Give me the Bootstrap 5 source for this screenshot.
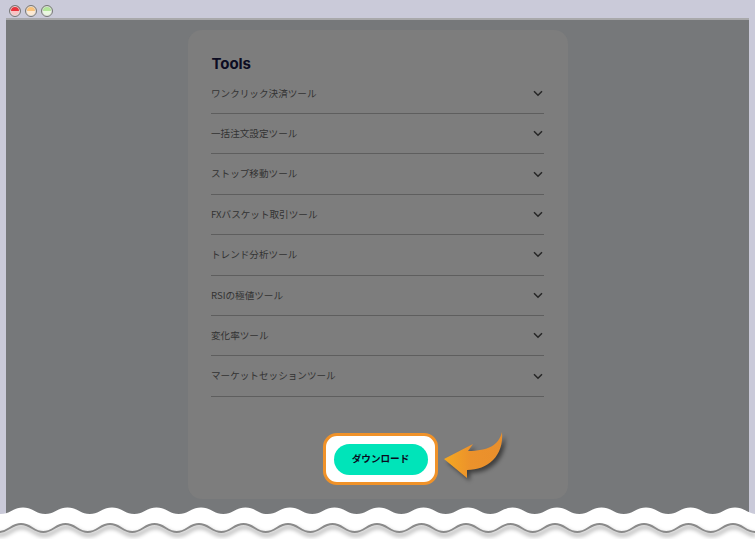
<!DOCTYPE html>
<html lang="ja"><head><meta charset="utf-8">
<link href="https://cdn.jsdelivr.net/npm/bootstrap@5.3.0/dist/css/bootstrap.min.css" rel="stylesheet">
<style>
html,body{margin:0;height:540px;width:755px;overflow:hidden;background:#fff}
.shot-frame{height:540px;background:#cacad9;position:relative;overflow:hidden}
.shot-top{height:18px;padding:5px 0 0 9px;gap:4px;border-top-left-radius:4px}
.dot{width:12px;height:12px;border-radius:50%;border:1px solid #777;box-shadow:inset 0 0 0 1px #ddd}
.dot-r{background:linear-gradient(#e8323c 0 50%,#f9c3c3 50%)}
.dot-o{background:linear-gradient(#f8c27c 0 50%,#fde9d2 50%)}
.dot-g{background:linear-gradient(#b3e59a 0 50%,#eaf8e0 50%)}
.shot-view{height:522px;margin:0 6px;background:#76787a;border-top:2px solid #a9a9ab;padding-top:10px}
.tools-card{width:380px;height:469px;margin-left:182px;background:#7d7d7d;border-radius:14px;padding:25px 24px 0 23px}
.tools-title{font:700 15px/18px Inter,"Liberation Sans",sans-serif;color:#0c0c22;margin:0 0 .7px;padding-left:.5px;letter-spacing:-.05px}
.tool-row{height:40.4px;border-bottom:1px solid #5e5e5e;font:400 9.6px/1 "Noto Sans CJK JP",sans-serif;color:#333}
.tool-row svg{margin-right:1px}
.dl-wrap{margin-top:36.3px;padding-left:5px}
.dl-ring{width:115px;height:52px;background:#fff;border:3px solid #f09229;border-radius:14px;padding-left:1px}
.dl-btn{width:94px;height:31px;border:0;border-radius:16px;background:#00e4b9;color:#0a0a1e;font:700 9.6px/1 "Noto Sans CJK JP",sans-serif;padding:0}
.over-art{position:absolute;left:0;top:0;pointer-events:none}
</style></head>
<body>
<div class="shot-frame">
  <div class="shot-top d-flex"><span class="dot dot-r"></span><span class="dot dot-o"></span><span class="dot dot-g"></span></div>
  <div class="shot-view">
    <div class="tools-card">
      <h2 class="tools-title">Tools</h2>
      <div class="tool-row d-flex align-items-center justify-content-between">ワンクリック決済ツール<svg width="10" height="7" viewBox="0 0 10 7"><path d="M1 1.2 5 5.2 9 1.2" fill="none" stroke="#262626" stroke-width="1.5"/></svg></div>
      <div class="tool-row d-flex align-items-center justify-content-between">一括注文設定ツール<svg width="10" height="7" viewBox="0 0 10 7"><path d="M1 1.2 5 5.2 9 1.2" fill="none" stroke="#262626" stroke-width="1.5"/></svg></div>
      <div class="tool-row d-flex align-items-center justify-content-between">ストップ移動ツール<svg width="10" height="7" viewBox="0 0 10 7"><path d="M1 1.2 5 5.2 9 1.2" fill="none" stroke="#262626" stroke-width="1.5"/></svg></div>
      <div class="tool-row d-flex align-items-center justify-content-between">FXバスケット取引ツール<svg width="10" height="7" viewBox="0 0 10 7"><path d="M1 1.2 5 5.2 9 1.2" fill="none" stroke="#262626" stroke-width="1.5"/></svg></div>
      <div class="tool-row d-flex align-items-center justify-content-between">トレンド分析ツール<svg width="10" height="7" viewBox="0 0 10 7"><path d="M1 1.2 5 5.2 9 1.2" fill="none" stroke="#262626" stroke-width="1.5"/></svg></div>
      <div class="tool-row d-flex align-items-center justify-content-between">RSIの極値ツール<svg width="10" height="7" viewBox="0 0 10 7"><path d="M1 1.2 5 5.2 9 1.2" fill="none" stroke="#262626" stroke-width="1.5"/></svg></div>
      <div class="tool-row d-flex align-items-center justify-content-between">変化率ツール<svg width="10" height="7" viewBox="0 0 10 7"><path d="M1 1.2 5 5.2 9 1.2" fill="none" stroke="#262626" stroke-width="1.5"/></svg></div>
      <div class="tool-row d-flex align-items-center justify-content-between">マーケットセッションツール<svg width="10" height="7" viewBox="0 0 10 7"><path d="M1 1.2 5 5.2 9 1.2" fill="none" stroke="#262626" stroke-width="1.5"/></svg></div>
      <div class="dl-wrap d-flex justify-content-center">
        <div class="dl-ring d-flex align-items-center justify-content-center"><button class="dl-btn" type="button">ダウンロード</button></div>
      </div>
    </div>
  </div>
  <svg class="over-art" width="755" height="540" viewBox="0 0 755 540">
    <defs>
      <linearGradient id="ag" x1="0" x2="1" y1="0" y2="0"><stop offset="0" stop-color="#f5a921"/><stop offset=".45" stop-color="#ec922b"/><stop offset="1" stop-color="#e98f2c"/></linearGradient>
      <filter id="as" x="-30%" y="-30%" width="170%" height="170%"><feGaussianBlur stdDeviation="2"/></filter>
      <path id="lw" d="M-45.75 532 c10 0 12.25 -8 22.25 -8 c10 0 12.25 8 22.25 8 c10 0 12.25 -8 22.25 -8 c10 0 12.25 8 22.25 8 c10 0 12.25 -8 22.25 -8 c10 0 12.25 8 22.25 8 c10 0 12.25 -8 22.25 -8 c10 0 12.25 8 22.25 8 c10 0 12.25 -8 22.25 -8 c10 0 12.25 8 22.25 8 c10 0 12.25 -8 22.25 -8 c10 0 12.25 8 22.25 8 c10 0 12.25 -8 22.25 -8 c10 0 12.25 8 22.25 8 c10 0 12.25 -8 22.25 -8 c10 0 12.25 8 22.25 8 c10 0 12.25 -8 22.25 -8 c10 0 12.25 8 22.25 8 c10 0 12.25 -8 22.25 -8 c10 0 12.25 8 22.25 8 c10 0 12.25 -8 22.25 -8 c10 0 12.25 8 22.25 8 c10 0 12.25 -8 22.25 -8 c10 0 12.25 8 22.25 8 c10 0 12.25 -8 22.25 -8 c10 0 12.25 8 22.25 8 c10 0 12.25 -8 22.25 -8 c10 0 12.25 8 22.25 8 c10 0 12.25 -8 22.25 -8 c10 0 12.25 8 22.25 8 c10 0 12.25 -8 22.25 -8 c10 0 12.25 8 22.25 8 c10 0 12.25 -8 22.25 -8 c10 0 12.25 8 22.25 8 c10 0 12.25 -8 22.25 -8 c10 0 12.25 8 22.25 8"/>
    </defs>
    <path d="M502 432 C499 445 488 451 468 451 L473 444 L444 459 L467 478 L467 470 C488 470 504 456 502 432Z" fill="#000" opacity=".5" filter="url(#as)" transform="translate(3 3)"/>
    <path d="M502 432 C499 445 488 451 468 451 L473 444 L444 459 L467 478 L467 470 C488 470 504 456 502 432Z" fill="url(#ag)"/>
    <path d="M-43.75 514 c10 0 12.25 -6.5 22.25 -6.5 c10 0 12.25 6.5 22.25 6.5 c10 0 12.25 -6.5 22.25 -6.5 c10 0 12.25 6.5 22.25 6.5 c10 0 12.25 -6.5 22.25 -6.5 c10 0 12.25 6.5 22.25 6.5 c10 0 12.25 -6.5 22.25 -6.5 c10 0 12.25 6.5 22.25 6.5 c10 0 12.25 -6.5 22.25 -6.5 c10 0 12.25 6.5 22.25 6.5 c10 0 12.25 -6.5 22.25 -6.5 c10 0 12.25 6.5 22.25 6.5 c10 0 12.25 -6.5 22.25 -6.5 c10 0 12.25 6.5 22.25 6.5 c10 0 12.25 -6.5 22.25 -6.5 c10 0 12.25 6.5 22.25 6.5 c10 0 12.25 -6.5 22.25 -6.5 c10 0 12.25 6.5 22.25 6.5 c10 0 12.25 -6.5 22.25 -6.5 c10 0 12.25 6.5 22.25 6.5 c10 0 12.25 -6.5 22.25 -6.5 c10 0 12.25 6.5 22.25 6.5 c10 0 12.25 -6.5 22.25 -6.5 c10 0 12.25 6.5 22.25 6.5 c10 0 12.25 -6.5 22.25 -6.5 c10 0 12.25 6.5 22.25 6.5 c10 0 12.25 -6.5 22.25 -6.5 c10 0 12.25 6.5 22.25 6.5 c10 0 12.25 -6.5 22.25 -6.5 c10 0 12.25 6.5 22.25 6.5 c10 0 12.25 -6.5 22.25 -6.5 c10 0 12.25 6.5 22.25 6.5 c10 0 12.25 -6.5 22.25 -6.5 c10 0 12.25 6.5 22.25 6.5 c10 0 12.25 -6.5 22.25 -6.5 c10 0 12.25 6.5 22.25 6.5 V545 H-43.75Z" fill="#fff"/>
    <use href="#lw" fill="none" stroke="#000" stroke-opacity=".35" stroke-width="3" filter="url(#as)" transform="translate(1 3)"/>
    <use href="#lw" fill="none" stroke="#8a8a8a" stroke-width="2"/>
  </svg>
</div>
<script src="https://cdn.jsdelivr.net/npm/bootstrap@5.3.0/dist/js/bootstrap.bundle.min.js"></script>
</body></html>
